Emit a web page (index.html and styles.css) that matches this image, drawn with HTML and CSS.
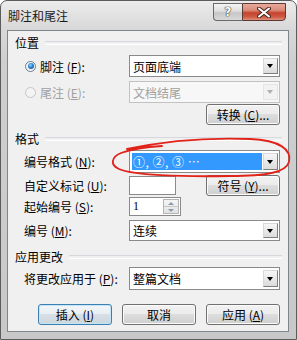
FILE: index.html
```html
<!DOCTYPE html>
<html lang="zh-CN">
<head>
<meta charset="utf-8">
<title>脚注和尾注</title>
<link rel="stylesheet" href="styles.css">
</head>
<body>
<div class="window">
  <div class="titlebar">
    <span class="title">脚注和尾注</span>
    <div class="caption">
      <div class="cb help">?</div>
      <div class="cb close">
        <svg width="14" height="11" viewBox="0 0 14 11">
          <path d="M2 1.5 L12 9.5 M12 1.5 L2 9.5" stroke="#4a2a24" stroke-width="4" stroke-linecap="round"/>
          <path d="M2 1.5 L12 9.5 M12 1.5 L2 9.5" stroke="#ffffff" stroke-width="2" stroke-linecap="round"/>
        </svg>
      </div>
    </div>
  </div>
  <div class="client">
    <div class="group-head h1">位置</div>
    <div class="row r1">
      <div class="lbl radio-lbl"><span class="radio checked"></span><span>脚注 (<u>F</u>):</span></div>
      <div class="combo"><span class="val">页面底端</span><span class="arrow"></span></div>
    </div>
    <div class="row r2">
      <div class="lbl radio-lbl disabled"><span class="radio off"></span><span>尾注 (<u>E</u>):</span></div>
      <div class="combo dis"><span class="val">文档结尾</span><span class="arrow"></span></div>
    </div>
    <div class="row r3 end">
      <div class="btn">转换 (<u>C</u>)...</div>
    </div>
    <div class="group-head h2">格式</div>
    <div class="row r4">
      <div class="lbl">编号格式 (<u>N</u>):</div>
      <div class="combo sel"><span class="val">①, ②, ③ …</span><span class="arrow"></span></div>
    </div>
    <div class="row r5">
      <div class="lbl">自定义标记 (<u>U</u>):</div>
      <div class="textbox"></div>
      <div class="btn push">符号 (<u>Y</u>)...</div>
    </div>
    <div class="row r6">
      <div class="lbl">起始编号 (<u>S</u>):</div>
      <div class="spin"><span class="val">1</span><span class="spinbtns"><span class="up"></span><span class="down"></span></span></div>
    </div>
    <div class="row r7">
      <div class="lbl">编号 (<u>M</u>):</div>
      <div class="combo"><span class="val">连续</span><span class="arrow"></span></div>
    </div>
    <div class="group-head h3">应用更改</div>
    <div class="row r8">
      <div class="lbl">将更改应用于 (<u>P</u>):</div>
      <div class="combo"><span class="val">整篇文档</span><span class="arrow"></span></div>
    </div>
    <div class="row r9 end buttons">
      <div class="btn default">插入 (<u>I</u>)</div>
      <div class="btn">取消</div>
      <div class="btn">应用 (<u>A</u>)</div>
    </div>
  </div>
  <svg class="annot" width="297" height="340" viewBox="0 0 297 340">
    <path d="M127 149 C 160 142, 200 137, 250 139 C 280 140, 292 150, 289 162 C 286 172, 268 176, 230 176 C 180 177, 132 175, 119 169 C 110 165, 111 157, 121 153 C 132 149, 146 147, 162 146" fill="none" stroke="#e2231a" stroke-width="1.8" stroke-linecap="round"/>
  </svg>
</div>
</body>
</html>
```
FILE: styles.css
```css
* { box-sizing: border-box; }
html, body { margin: 0; padding: 0; }
body {
  width: 297px;
  height: 340px;
  overflow: hidden;
  background: #ffffff;
  font-family: "Noto Sans CJK SC", "Noto Sans", sans-serif;
  font-size: 12px;
  color: #000;
}
u { text-decoration: underline; text-underline-offset: 1px; }

.window {
  position: relative;
  width: 297px;
  height: 340px;
  border: 1px solid #5c5c5c;
  border-radius: 7px 7px 0 0;
  background: linear-gradient(#ececec 0px, #d8d8d8 28px, #cfcfcf 60px, #c8c8c8 100%);
  padding: 0 7px 7px 6px;
  display: flex;
  flex-direction: column;
}

.titlebar {
  height: 29px;
  display: flex;
  align-items: flex-start;
  flex: none;
}
.title {
  margin-top: 7px;
  padding-left: 1px;
  line-height: 16px;
  color: #1a1a1a;
}
.caption {
  margin-left: auto;
  margin-right: 3px;
  margin-top: 2px;
  display: flex;
}
.cb {
  height: 18px;
  display: flex;
  align-items: center;
  justify-content: center;
  border: 1px solid #6a6a6a;
}
.help {
  width: 29px;
  border-right: none;
  border-radius: 0 0 0 4px;
  background: linear-gradient(#f4f4f4 0%, #dedede 45%, #c6c6c6 55%, #d8d8d8 100%);
  color: #fff;
  font-family: "DejaVu Sans", sans-serif;
  font-weight: bold;
  font-size: 12px;
  text-shadow: 0 0 1px #333, 0 0 1px #333, 0 0 1px #333;
}
.close {
  width: 44px;
  border-color: #5a3a34;
  border-radius: 0 0 4px 0;
  background: linear-gradient(#e9a99b 0%, #d98a78 40%, #c7432e 55%, #cd5a44 80%, #e08f7a 100%);
}

.client {
  flex: 1;
  background: #f0f0f0;
  border: 1px solid #7f858c;
  padding: 0 8px 0 7px;
  display: flex;
  flex-direction: column;
}

.group-head {
  height: 16px;
  display: flex;
  align-items: center;
  line-height: 16px;
  margin-right: -2px;
}
.group-head::after {
  content: "";
  flex: 1;
  margin-left: 6px;
  height: 2px;
  border-top: 1px solid #d5d9dd;
  border-bottom: 1px solid #ffffff;
}
.h1 { margin-top: 4px; }
.h2 { margin-top: 6px; }
.h3 { margin-top: 8px; }

.row {
  display: flex;
  align-items: center;
  padding-left: 9px;
}
.row.end { justify-content: flex-end; }
.r1 { margin-top: 4px; height: 22px; }
.r2 { margin-top: 4px; height: 22px; }
.r3 { margin-top: 1px; height: 21px; }
.r4 { margin-top: 3px; height: 23px; }
.r5 { margin-top: 2px; height: 20px; }
.r6 { margin-top: 2px; height: 19px; }
.r7 { margin-top: 4px; height: 21px; }
.r8 { margin-top: 2px; height: 23px; }
.r9 { margin-top: 14px; height: 21px; }

.lbl {
  width: 105px;
  flex: none;
  white-space: nowrap;
  display: flex;
  align-items: center;
}
.radio-lbl { padding-left: 1px; gap: 4px; }
.disabled { color: #a0a0a0; }

.radio {
  width: 11px;
  height: 11px;
  border-radius: 50%;
  flex: none;
  position: relative;
}
.radio.checked {
  border: 1px solid #6b7e94;
  background: radial-gradient(circle at 50% 50%, #e4e7eb 0, #f8f8f8 100%);
}
.radio.checked::after {
  content: "";
  position: absolute;
  left: 1.5px;
  top: 1.5px;
  width: 6px;
  height: 6px;
  border-radius: 50%;
  background: radial-gradient(circle at 40% 35%, #9ad4ff 0, #2b84d0 45%, #174a7c 100%);
}
.radio.off {
  border: 1px solid #c6c6c6;
  background: #f4f4f4;
}

.combo {
  width: 151px;
  height: 100%;
  flex: none;
  display: flex;
  border: 1px solid #8a8a8a;
  background: #fff;
  padding: 2px 1px 2px 2px;
}
.combo .val {
  flex: 1;
  display: flex;
  align-items: center;
  padding-left: 1px;
  white-space: nowrap;
  overflow: hidden;
}
.combo .arrow {
  width: 15px;
  flex: none;
  border: 1px solid;
  border-color: #d8d8d8 #7e7e7e #7e7e7e #d8d8d8;
  background: linear-gradient(#f6f6f6, #dcdcdc);
  position: relative;
}
.combo .arrow::after {
  content: "";
  position: absolute;
  left: 50%;
  top: 50%;
  margin-left: -3.5px;
  margin-top: -2px;
  border-left: 3.5px solid transparent;
  border-right: 3.5px solid transparent;
  border-top: 4px solid #000;
}
.combo.dis { border-color: #c2c2c2; background: #f7f7f7; color: #a0a0a0; }
.combo.dis .arrow { border-color: #e4e4e4; background: #f2f2f2; }
.combo.dis .arrow::after { border-top-color: #b0b0b0; }
.combo.sel .val {
  background: #3399ff;
  color: #fff;
  margin-right: 1px;
  letter-spacing: 0.5px;
}

.textbox {
  width: 47px;
  height: 19px;
  flex: none;
  border: 1px solid #8a8a8a;
  background: #fff;
}
.push { margin-left: auto; }

.spin {
  width: 52px;
  height: 19px;
  flex: none;
  display: flex;
  border: 1px solid #8a8a8a;
  background: #fff;
  padding: 1px;
}
.spin .val {
  flex: 1;
  padding-left: 2px;
  line-height: 15px;
  font-family: "Liberation Serif", "Noto Sans CJK SC", serif;
}
.spinbtns {
  width: 16px;
  display: flex;
  flex-direction: column;
  border: 1px solid #b4b4b4;
  background: linear-gradient(#f5f5f5, #e2e2e2);
}
.spinbtns span {
  flex: 1;
  position: relative;
}
.spinbtns .up { border-bottom: 1px solid #c8c8c8; }
.spinbtns span::after {
  content: "";
  position: absolute;
  left: 50%;
  top: 50%;
  margin-left: -3px;
  margin-top: -1.5px;
  border-left: 3px solid transparent;
  border-right: 3px solid transparent;
}
.spinbtns .up::after { border-bottom: 3px solid #8c9aa8; }
.spinbtns .down::after { border-top: 3px solid #8c9aa8; }

.btn {
  width: 74px;
  height: 21px;
  flex: none;
  display: flex;
  align-items: center;
  justify-content: center;
  border: 1px solid #707070;
  border-radius: 3px;
  background: linear-gradient(#f2f2f2 0%, #ebebeb 49%, #dddddd 50%, #cfcfcf 100%);
  box-shadow: inset 0 0 0 1px #fbfbfb;
  white-space: nowrap;
}
.btn.default {
  border-color: #3c7fb1;
  box-shadow: inset 0 0 0 1px #c4e5f8;
  background: linear-gradient(#f3f6f8 0%, #e8eef2 49%, #d7e0e6 50%, #cbd6dd 100%);
}
.buttons { gap: 10px; }

.annot {
  position: absolute;
  left: -1px;
  top: -1px;
  pointer-events: none;
}
```
